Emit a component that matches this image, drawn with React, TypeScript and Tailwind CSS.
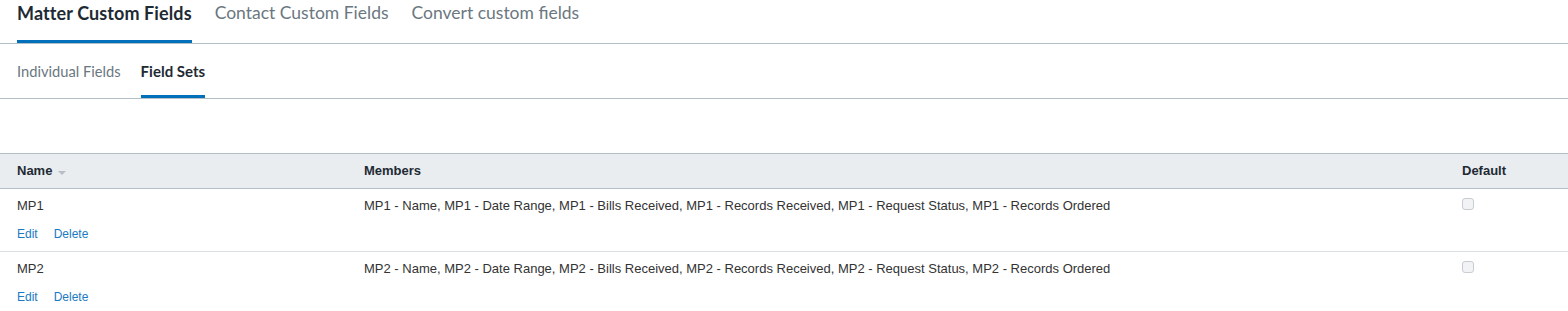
import React from "react";

const topTabs = [
  { label: "Matter Custom Fields", active: true },
  { label: "Contact Custom Fields", active: false },
  { label: "Convert custom fields", active: false },
];

const subTabs = [
  { label: "Individual Fields", active: false },
  { label: "Field Sets", active: true },
];

const fieldSets = ["MP1", "MP2"];

const members = (p: string) =>
  [
    "Name",
    "Date Range",
    "Bills Received",
    "Records Received",
    "Request Status",
    "Records Ordered",
  ]
    .map((m) => `${p} - ${m}`)
    .join(", ");

const App = () => {
  return (
    <div className="w-[1568px] h-[311px] bg-white overflow-hidden">
      {/* Top tabs */}
      <div className="flex gap-[23px] pl-[17px] h-[44px] border-b border-[#b4c0c8] font-['Lato',sans-serif]">
        {topTabs.map((t) => (
          <div
            key={t.label}
            className={`flex items-start border-b-[3px] ${
              t.active
                ? "text-[18px] tracking-[0.1px] font-bold text-[#1e2a33] border-[#0070bb]"
                : "text-[17.5px] text-[#6b7780] border-transparent"
            }`}
          >
            {t.label}
          </div>
        ))}
      </div>

      {/* Sub tabs */}
      <div className="flex gap-[20px] pl-[17px] h-[55px] border-b border-[#b4c0c8] font-['Lato',sans-serif]">
        {subTabs.map((t) => (
          <div
            key={t.label}
            className={`flex items-start pt-[16px] border-b-[3px] ${
              t.active
                ? "text-[15px] font-bold text-[#1e2a33] border-[#0070bb]"
                : "text-[14.7px] text-[#6b7780] border-transparent"
            }`}
          >
            {t.label}
          </div>
        ))}
      </div>

      {/* Table */}
      <div className="mt-[54px] font-['Liberation_Sans',Arial,sans-serif] text-[13px] text-[#333]">
        <div className="grid grid-cols-[364px_1098px_106px] h-[36px] bg-[#e9edf0] border-y border-[#b4c0c8] font-bold text-[#1e2a33]">
          <div className="flex items-center pl-[17px] gap-[6px]">
            Name
            <svg width="8" height="5" viewBox="0 0 8 5" className="mt-[4px]">
              <path d="M0 0h8L4 4z" fill="#b8bec3" />
            </svg>
          </div>
          <div className="flex items-center">Members</div>
          <div className="flex items-center">Default</div>
        </div>
        {fieldSets.map((p) => (
          <div
            key={p}
            className="grid grid-cols-[364px_1098px_106px] h-[63px] border-b border-[#dcdfe2]"
          >
            <div className="pl-[17px] pt-[7px]">
              <div>{p}</div>
              <div className="flex gap-[16px] mt-[9px] text-[12px] text-[#1a7ac2]">
                <span>Edit</span>
                <span>Delete</span>
              </div>
            </div>
            <div className="pt-[7px]">{members(p)}</div>
            <div className="pt-[9px]">
              <div className="w-[12px] h-[12px] rounded-[3px] border border-[#c9cdd1] bg-[#f2f3f4]" />
            </div>
          </div>
        ))}
      </div>
    </div>
  );
};

export default App;
